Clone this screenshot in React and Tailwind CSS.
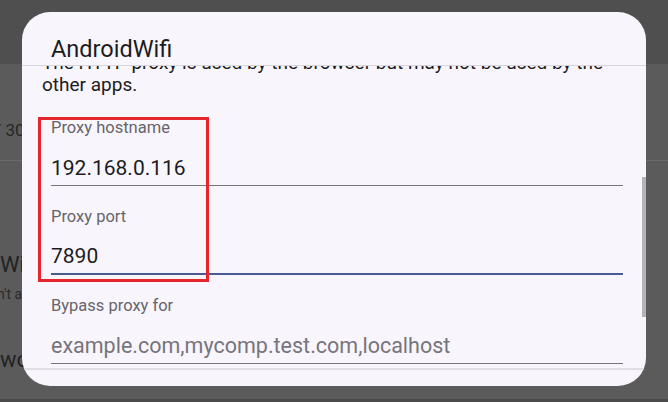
export default function App() {
  return (
    <div className="relative w-[668px] h-[402px] overflow-hidden bg-[#5b5b5b] font-['Roboto',sans-serif]">
      {/* dimmed background page */}
      <div className="flex flex-col h-full">
        <div className="h-[64px] bg-[#4f4f4f]" />
        <div className="h-[97px] border-b border-[#6a6a6a]">
          <div className="mt-[55px] ml-[-9px] text-[17px] leading-[22px] text-[#262626] whitespace-nowrap">Y 30</div>
        </div>
        <div className="mt-[91px] text-[22px] leading-[26px] text-[#232323] whitespace-nowrap">Wi-Fi</div>
        <div className="mt-[7px] ml-[-3px] text-[14px] leading-[18px] text-[#2a2a2a] whitespace-nowrap">n't allow</div>
        <div className="mt-[44px] text-[22px] leading-[26px] text-[#232323] whitespace-nowrap">work</div>
        <div className="flex-1" />
        <div className="h-[3px] bg-[#4b4b4b]" />
      </div>

      {/* dialog */}
      <div className="absolute left-[22px] top-[12px] w-[624px] h-[374px] rounded-[28px] bg-[#f8f6fc] overflow-hidden flex flex-col">
        <div className="h-[54px] shrink-0 border-b border-[#d7d5db] pl-[29px] pt-[23px]">
          <div className="text-[23.5px] leading-[28px] text-[#1d1b20]">AndroidWifi</div>
        </div>
        <div className="h-[302px] shrink-0 overflow-hidden">
          <div className="mt-[-14px] pl-[20px] pr-[23px] text-[19px] leading-[22px] text-[#1d1b20]">
            The HTTP proxy is used by the browser but may not be used by the other apps.
          </div>
          <div className="pl-[29px] pr-[23px]">
            <div className="mt-[22px] text-[16.5px] leading-[20px] text-[#67646b]">Proxy hostname</div>
            <div className="mt-[16px] pb-[3px] border-b border-[#77757a] text-[21px] leading-[28px] text-[#1c1b1f]">192.168.0.116</div>
            <div className="mt-[21px] text-[16.5px] leading-[20px] text-[#67646b]">Proxy port</div>
            <div className="mt-[15px] pb-[3px] border-b-2 border-[#4a5b94] text-[21px] leading-[28px] text-[#1c1b1f]">7890</div>
            <div className="mt-[21px] text-[16.5px] leading-[20px] text-[#67646b]">Bypass proxy for</div>
            <div className="mt-[16px] pb-[3px] border-b border-[#77757a] text-[21.5px] leading-[28px] text-[#77747b] whitespace-nowrap">example.com,mycomp.test.com,localhost</div>
          </div>
        </div>
        <div className="flex-1 border-t-2 border-[#e0dee4]" />
        <div className="absolute right-0 top-[165px] w-[4px] h-[140px] bg-[#b4b4b6]" />
      </div>

      {/* annotation box */}
      <div className="absolute left-[38px] top-[117px] w-[171px] h-[165px] border-[3px] border-[#e5262d]" />
    </div>
  );
}
